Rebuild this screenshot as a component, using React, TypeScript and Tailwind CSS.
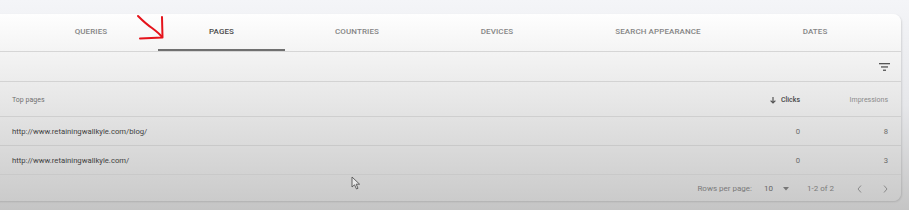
import React from 'react';

const tabs = [
  { label: 'QUERIES', w: 'w-[134px]' },
  { label: 'PAGES', w: 'w-[127px]', active: true },
  { label: 'COUNTRIES', w: 'w-[144px]' },
  { label: 'DEVICES', w: 'w-[136px]' },
  { label: 'SEARCH APPEARANCE', w: 'w-[186px]' },
  { label: 'DATES', w: 'w-[128px]' },
];

const rows = [
  { page: 'http://www.retainingwallkyle.com/blog/', clicks: 0, impressions: 8 },
  { page: 'http://www.retainingwallkyle.com/', clicks: 0, impressions: 3 },
];

const App: React.FC = () => {
  return (
    <div
      className="relative w-[909px] h-[210px] overflow-hidden bg-gradient-to-b from-[#f4f5f8] via-[#e6e7ea] to-[#c5c5c5] pt-[14px]"
      style={{ fontFamily: 'Roboto, "Liberation Sans", sans-serif' }}
    >
      {/* Card */}
      <div className="ml-[-10px] w-[911px] h-[187px] rounded-lg bg-gradient-to-b from-[#fefefe] via-[#e5e5e5] to-[#cbcbcb] shadow-[1px_1px_2px_rgba(0,0,0,0.12)] flex flex-col">
        {/* Tabs */}
        <div className="flex h-[38px] pl-[34px] border-b border-[#d6d6d6]">
          {tabs.map((tab) => (
            <div
              key={tab.label}
              className={`${tab.w} flex items-center justify-center text-[8px] font-medium tracking-[0.1px] ${
                tab.active ? 'text-[#4a4a4a] border-b-2 border-[#707070] pt-[1px]' : 'text-[#858585] pb-[1px]'
              }`}
            >
              {tab.label}
            </div>
          ))}
        </div>

        {/* Filter row */}
        <div className="flex h-[30px] items-center justify-end pr-[11px] border-b border-[#d3d3d3]">
          <svg width="11" height="8" viewBox="0 0 11 8" className="text-[#555]">
            <rect x="0" y="0" width="11" height="1.3" fill="currentColor" />
            <rect x="2" y="3.3" width="7" height="1.3" fill="currentColor" />
            <rect x="4" y="6.6" width="3" height="1.3" fill="currentColor" />
          </svg>
        </div>

        {/* Header */}
        <div className="flex h-[35px] items-center pt-[2px] pl-[22px] pr-[13px] border-b border-[#cfcfcf]">
          <div className="flex-1 text-[#707070] text-[7px]">Top pages</div>
          <div className="w-[100px] flex items-center justify-end gap-[5px] text-[#474747] font-medium text-[7px]">
            <svg width="6" height="7" viewBox="0 0 6 7">
              <path d="M3 0 V6 M0.6 3.6 L3 6 L5.4 3.6" stroke="#555" strokeWidth="1.2" fill="none" />
            </svg>
            Clicks
          </div>
          <div className="w-[88px] text-right text-[#8a8a8a] text-[7px]">Impressions</div>
        </div>

        {/* Rows */}
        {rows.map((r) => (
          <div
            key={r.page}
            className="flex h-[29px] items-center pt-[1px] pl-[22px] pr-[13px] border-b border-[#c9c9c9] text-[7.7px]"
          >
            <div className="flex-1 text-[#3f3f3f]">{r.page}</div>
            <div className="w-[100px] text-right text-[#6a6a6a]">{r.clicks}</div>
            <div className="w-[88px] text-right text-[#6a6a6a]">{r.impressions}</div>
          </div>
        ))}

        {/* Footer */}
        <div className="flex flex-1 items-center justify-end pt-[1px] pr-[13px] text-[8px] text-[#7a7a7a]">
          <span>Rows per page:</span>
          <span className="ml-[12px] text-[#666]">10</span>
          <svg width="6" height="4" viewBox="0 0 6 4" className="ml-[10px]">
            <path d="M0 0 H6 L3 3.5 Z" fill="#777" />
          </svg>
          <span className="ml-[18px]">1-2 of 2</span>
          <svg width="5" height="8" viewBox="0 0 5 8" className="ml-[23px]">
            <path d="M4 0.5 L1 4 L4 7.5" stroke="#8a8a8a" strokeWidth="1" fill="none" />
          </svg>
          <svg width="5" height="8" viewBox="0 0 5 8" className="ml-[21px]">
            <path d="M1 0.5 L4 4 L1 7.5" stroke="#8a8a8a" strokeWidth="1" fill="none" />
          </svg>
        </div>
      </div>

      {/* Red annotation arrow */}
      <svg className="absolute left-[134px] top-[13px]" width="34" height="30" viewBox="0 0 34 30">
        <path
          d="M4 3 C 9 8, 12 11, 18 15 C 22 18, 26 21, 28 24"
          stroke="#e5131b"
          strokeWidth="2"
          fill="none"
          strokeLinecap="round"
        />
        <path d="M28 4 L28.5 24.5 L6 25.5" stroke="#e5131b" strokeWidth="2" fill="none" strokeLinecap="round" strokeLinejoin="round" />
      </svg>

      {/* Mouse cursor */}
      <svg className="absolute left-[351px] top-[176px]" width="10" height="14" viewBox="0 0 10 14">
        <path d="M1 1 L1 11 L3.5 8.8 L5.5 13 L7 12.3 L5.2 8.2 L8.6 8.2 Z" fill="#e8e8e8" stroke="#555" strokeWidth="0.9" strokeLinejoin="round" />
      </svg>
    </div>
  );
};

export default App;
